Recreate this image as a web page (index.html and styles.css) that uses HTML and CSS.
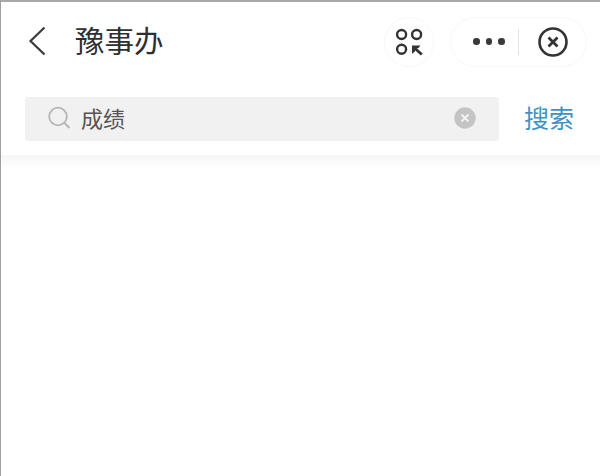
FILE: index.html
```html
<!DOCTYPE html>
<html lang="zh">
<head>
<meta charset="utf-8">
<title>豫事办</title>
<link rel="stylesheet" href="styles.css">
</head>
<body>
<div class="page">
  <header class="nav">
    <svg class="back" width="18" height="30" viewBox="0 0 18 30"><path d="M16.500 1.500 2.500 15l14 13.500" fill="none" stroke="#3a3a3a" stroke-width="2.200"/></svg>
    <h1 class="title">豫事办</h1>
    <div class="scan">
      <svg width="30" height="30" viewBox="0 0 30 30">
        <g fill="none" stroke="#333" stroke-width="2.400">
          <circle cx="7.600" cy="7.500" r="4.500"/>
          <circle cx="22.600" cy="7.500" r="4.500"/>
          <circle cx="7.600" cy="22.200" r="4.500"/>
          <path d="M20.500 21 27.800 27.500" stroke-width="2.800"/>
        </g>
        <path d="M18 18.500h8.500l-2.200 2.700h-3.300v3.300l-3 2.200z" fill="#333"/>
      </svg>
    </div>
    <div class="capsule">
      <div class="dots"><i></i><i></i><i></i></div>
      <span class="divider"></span>
      <svg width="32" height="32" viewBox="0 0 32 32">
        <circle cx="16" cy="16" r="13.500" fill="none" stroke="#333" stroke-width="2.600"/>
        <path d="M11.500 11.500l9 9m0-9-9 9" fill="none" stroke="#333" stroke-width="2.800"/>
      </svg>
    </div>
  </header>
  <div class="search-row">
    <div class="search">
      <svg class="lens" width="24" height="24" viewBox="0 0 24 24">
        <circle cx="10" cy="10.500" r="8.800" fill="none" stroke="#b5b5b5" stroke-width="1.800"/>
        <path d="M16.500 17l5 5" fill="none" stroke="#b5b5b5" stroke-width="2"/>
      </svg>
      <span class="query">成绩</span>
      <svg class="clear" width="22" height="22" viewBox="0 0 22 22">
        <circle cx="11" cy="11" r="10.700" fill="#c4c4c4"/>
        <path d="M7.500 7.500l7 7m0-7-7 7" fill="none" stroke="#f2f2f2" stroke-width="2"/>
      </svg>
    </div>
    <span class="go">搜索</span>
  </div>
  <div class="shade"></div>
</div>
</body>
</html>
```

FILE: styles.css
```css
* { box-sizing: border-box; }
html, body { margin: 0; height: 100%; }
body {
  background: #fff;
  font-family: "Noto Sans CJK SC", "Liberation Sans", sans-serif;
  overflow: hidden;
}
.page {
  width: 600px;
  height: 476px;
  border-top: 2px solid #a8a8a8;
  border-left: 1px solid #a0a0a0;
}
.nav {
  display: flex;
  align-items: center;
  height: 79px;
  padding-left: 27px;
}
.back { flex: none; margin-bottom: 2px; }
.title {
  margin: 0 0 6px 29px;
  font-size: 29.500px;
  font-weight: 400;
  line-height: 40px;
  color: #2f2f2f;
  white-space: nowrap;
}
.scan {
  width: 50px;
  height: 50px;
  margin-left: auto;
  border: 1px solid #f8f8f8;
  border-radius: 50%;
  display: flex;
  align-items: center;
  justify-content: center;
}
.capsule {
  width: 137px;
  height: 50px;
  margin: 0 13px 0 16px;
  border: 1px solid #f8f8f8;
  border-radius: 25px;
  display: flex;
  align-items: center;
  padding-left: 22px;
}
.dots { display: flex; gap: 6px; }
.dots i {
  width: 6.500px;
  height: 6.500px;
  border-radius: 50%;
  background: #3a3a3a;
}
.divider {
  width: 1px;
  height: 26px;
  margin: 0 18px 0 13.500px;
  background: #e4e4e4;
}
.search-row {
  display: flex;
  align-items: center;
  height: 44px;
  margin-top: 16px;
  padding-left: 24px;
}
.search {
  display: flex;
  align-items: center;
  width: 474px;
  height: 44px;
  padding: 0 23px 2px 23px;
  background: #f1f1f1;
  border-radius: 3px;
}
.lens { flex: none; }
.query {
  margin: 0 0 2px 9px;
  font-size: 22px;
  color: #555;
}
.clear { margin-left: auto; flex: none; }
.go {
  margin: 0 0 5px 25px;
  font-size: 25px;
  color: #3d93c4;
}
.shade {
  height: 14px;
  margin-top: 14px;
  background: linear-gradient(#f6f6f6, #fff);
}
```
